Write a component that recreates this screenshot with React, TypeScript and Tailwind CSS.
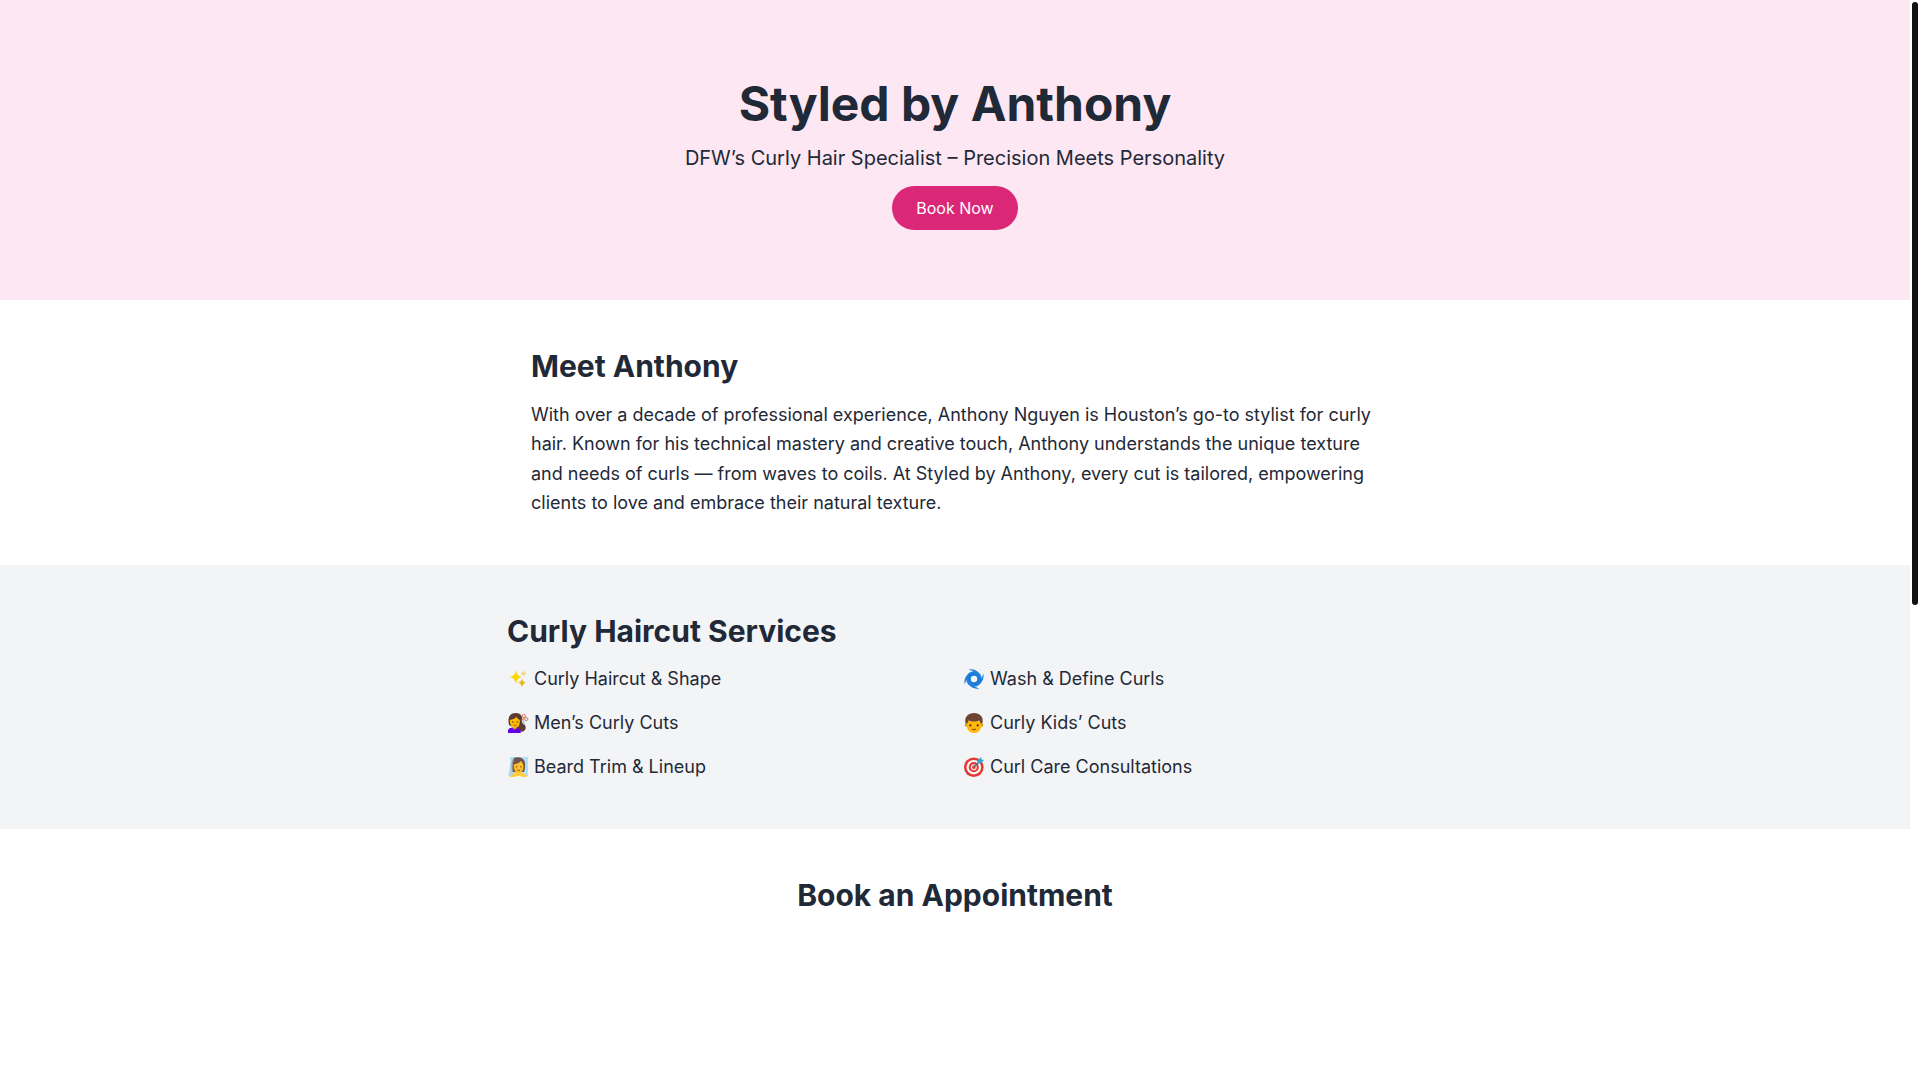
import type { ReactNode } from "react";

const Emoji = ({ label, children }: { label: string; children: ReactNode }) => (
  <svg
    role="img"
    aria-label={label}
    viewBox="-1 -1 22 22"
    className="h-[22px] w-[22px] shrink-0"
  >
    {children}
  </svg>
);

const Sparkles = () => (
  <Emoji label="Sparkles">
    <path
      d="M8 1 Q8.8 7.2 14 8 Q8.8 8.8 8 15.5 Q7.2 8.8 1.5 8 Q7.2 7.2 8 1Z"
      fill="#fdd803"
    />
    <path
      d="M15.5 1 Q16 4 19 4.5 Q16 5 15.5 8 Q15 5 12.5 4.5 Q15 4 15.5 1Z"
      fill="#f3d77e"
    />
    <path
      d="M14 9.5 Q14.7 13 18 13.7 Q14.7 14.4 14 18.5 Q13.3 14.4 10 13.7 Q13.3 13 14 9.5Z"
      fill="#e8b821"
    />
  </Emoji>
);

const Cyclone = () => (
  <Emoji label="Cyclone">
    <circle cx="10" cy="10" r="5.5" fill="none" stroke="#1e80dc" strokeWidth="4.6" />
    <path
      d="M4.5 .6 Q12-.8 16.6 6 L12 5 Q9.5 1.6 4.5 .6Z"
      fill="#1e80dc"
    />
    <path
      d="M19.4 4.5 Q20.8 12 14 16.6 L15 12 Q18.4 9.5 19.4 4.5Z"
      fill="#1e80dc"
    />
    <path
      d="M15.5 19.4 Q8 20.8 3.4 14 L8 15 Q10.5 18.4 15.5 19.4Z"
      fill="#1e80dc"
    />
    <path
      d="M.6 15.5 Q-.8 8 6 3.4 L5 8 Q1.6 10.5 .6 15.5Z"
      fill="#1e80dc"
    />
    <path
      d="M5 11 Q5 5.5 10 5 M15 9 Q15 14.5 10 15"
      fill="none"
      stroke="#166cc4"
      strokeWidth=".8"
    />
  </Emoji>
);

const Haircut = () => (
  <Emoji label="Haircut">
    <path
      d="M1 12 C-.5 5 1 .2 8 0 C14 0 15 5 14 9 C15 12 18.5 11 17.5 16 Q16 20 11 18Z"
      fill="#5a3b35"
    />
    <path d="M0 20 V17 Q1 14.6 6.5 14.6 Q12 14.6 13 20Z" fill="#6200ea" />
    <path d="M5 13 H8.5 V15.5 Q6.7 17.5 5 15.5Z" fill="#e59600" />
    <path
      d="M1.8 7 Q6 6.5 8.5 4 Q9.5 6 11.8 7 Q12.4 14.8 6.8 14.8 Q1.8 14.8 1.8 7Z"
      fill="#ffb804"
    />
    <path d="M4 9 H5.5 M8.5 9 H10" stroke="#4e3425" strokeWidth="1" />
    <path d="M5.5 12 Q7 13 8.5 12" fill="none" stroke="#8b4a24" strokeWidth=".8" />
    <path d="M15.5 5.5 L16 12" stroke="#90a4ae" strokeWidth=".8" />
    <circle cx="15.8" cy="3" r="1.6" fill="none" stroke="#df7963" />
    <circle cx="18.3" cy="6" r="1.6" fill="none" stroke="#df7963" />
    <path d="M13 7.5 L17.5 4.5" stroke="#d78c79" strokeWidth=".8" />
  </Emoji>
);

const Child = () => (
  <Emoji label="Child">
    <circle cx="2.4" cy="12" r="1.7" fill="#e59600" />
    <circle cx="17.6" cy="12" r="1.7" fill="#e59600" />
    <path d="M2.4 8 H17.6 V11.5 Q17 20 10 20 Q3 20 2.4 11.5Z" fill="#ffb70a" />
    <path
      d="M1.6 10.6 C-.2 3.5 4.6 0 10 0 S20.2 3.5 18.4 10.6 L16.8 10.6 L15.4 7.6 Q10 9.4 4.6 7.6 L3.2 10.6Z"
      fill="#6d4436"
    />
    <circle cx="6.3" cy="12.4" r="1.1" fill="#493329" />
    <circle cx="13.7" cy="12.4" r="1.1" fill="#493329" />
    <path
      d="M8 16 Q10 17.6 12 16"
      fill="none"
      stroke="#7b4023"
      strokeWidth="1"
    />
  </Emoji>
);

const Veil = () => (
  <Emoji label="Bride with veil">
    <path d="M2 0 H20 V19 H0 Q3 9 2 0Z" fill="#b3dff6" />
    <path
      d="M4 15 Q2 3 7 .5 Q14-1 16.5 4 Q18 9 16 15Z"
      fill="#70544b"
    />
    <path d="M1.5 20 Q3 16 8 15.5 L10 14 L13 15.5 Q18 16 19 20Z" fill="#ffcd3d" />
    <path
      d="M5.6 7.5 Q11 6.5 13 4 Q15 6 15.6 9 Q15.4 16 10.7 16 Q5.6 16 5.6 7.5Z"
      fill="#fcc02c"
    />
    <path d="M4 2 Q1 12 2 19 L6 18 Q3.5 10 6 2Z" fill="#b7cbd6" opacity=".6" />
    <path
      d="M7.6 9.8 H9.4 M12 9.8 H13.8 M9.3 13 Q10.8 14 12.3 13"
      fill="none"
      stroke="#7b4e2a"
      strokeWidth=".9"
    />
    <path d="M6 20 Q10 18 15 20Z" fill="#fafafa" />
  </Emoji>
);

const Target = () => (
  <Emoji label="Bullseye">
    <circle cx="9.8" cy="10.2" r="9.8" fill="#e53935" />
    <circle cx="9.8" cy="10.2" r="6.2" fill="none" stroke="#fafafa" strokeWidth="2.2" />
    <circle cx="9.8" cy="10.2" r="2.4" fill="none" stroke="#f5ded8" strokeWidth="1.3" />
    <path d="M10 10 L16 4" stroke="#54616b" strokeWidth="1.2" />
    <path d="M13 7 L13.6 3.4 L17 0 L17.5 2.5 L20 3 L16.6 6.4Z" fill="#29a9cf" />
  </Emoji>
);

const services = [
  { icon: <Sparkles />, name: "Curly Haircut & Shape" },
  { icon: <Cyclone />, name: "Wash & Define Curls" },
  { icon: <Haircut />, name: "Men’s Curly Cuts" },
  { icon: <Child />, name: "Curly Kids’ Cuts" },
  { icon: <Veil />, name: "Beard Trim & Lineup" },
  { icon: <Target />, name: "Curl Care Consultations" },
];

export default function App() {
  return (
    <div className="flex min-h-screen bg-white font-['Inter',sans-serif] text-[#1f2937]">
      <main className="min-w-0 flex-1">
        <section className="bg-[#fce7f3] px-6 py-20 text-center">
          <h1 className="mb-4 text-5xl font-bold">Styled by Anthony</h1>
          <p className="mb-6 text-xl">
            DFW’s Curly Hair Specialist – Precision Meets Personality
          </p>
          <a
            href="#book"
            className="rounded-full bg-[#db2777] px-6 py-3 text-white"
          >
            Book Now
          </a>
        </section>

        <section className="mx-auto max-w-4xl px-6 py-12">
          <h2 className="mb-4 text-3xl font-bold">Meet Anthony</h2>
          <p className="text-lg leading-relaxed">
            With over a decade of professional experience, Anthony Nguyen is
            Houston’s go-to stylist for curly hair. Known for his technical
            mastery and creative touch, Anthony understands the unique texture
            and needs of curls — from waves to coils. At Styled by Anthony,
            every cut is tailored, empowering clients to love and embrace their
            natural texture.
          </p>
        </section>

        <section className="bg-[#f3f4f6] px-6 py-12">
          <div className="mx-auto max-w-4xl">
            <h2 className="mb-4 text-3xl font-bold">Curly Haircut Services</h2>
            <ul className="grid gap-4 text-lg md:grid-cols-2">
              {services.map(({ icon, name }) => (
                <li key={name} className="flex items-center gap-[5px]">
                  {icon}
                  <span>{name}</span>
                </li>
              ))}
            </ul>
          </div>
        </section>

        <section id="book" className="px-6 py-12 text-center">
          <h2 className="mb-4 text-3xl font-bold">Book an Appointment</h2>
        </section>
      </main>

      {/* Scroll rail */}
      <div aria-hidden="true" className="w-2.5 shrink-0 bg-white px-0.5 py-0.5">
        <div className="sticky top-0.5 h-[603px] w-1.5 rounded-full bg-[#111111]" />
      </div>
    </div>
  );
}
